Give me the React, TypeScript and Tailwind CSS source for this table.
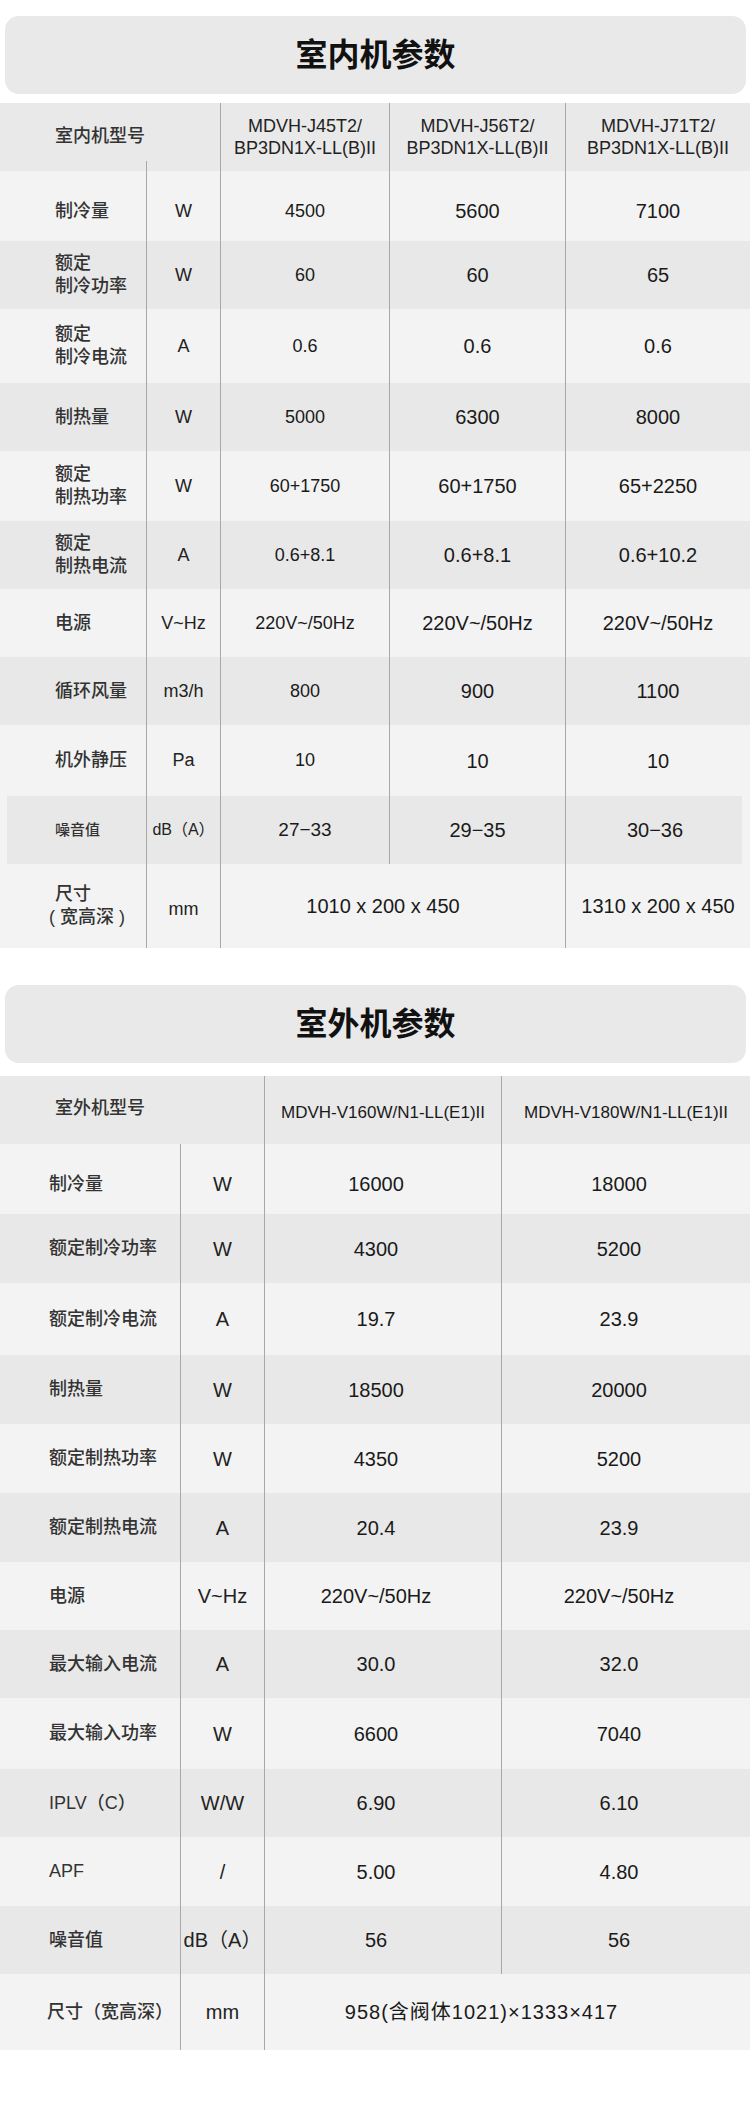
import React from 'react';

type Row = {
  label: string[];
  unit: string;
  values: string[];
  h: string;
  pad?: string;
};

const line = 'border-l border-[#a8a8a8]';

const indoorModels = [
  ['MDVH-J45T2/', 'BP3DN1X-LL(B)II'],
  ['MDVH-J56T2/', 'BP3DN1X-LL(B)II'],
  ['MDVH-J71T2/', 'BP3DN1X-LL(B)II'],
];
const indoorWidths = ['w-[169px]', 'w-[176px]', 'w-[185px]'];
const indoorValueSize = ['text-[18px]', 'text-[20px]', 'text-[20px]'];

// first row's content sits a bit lower than centre in the reference
const indoorRows: Row[] = [
  { label: ['制冷量'], unit: 'W', values: ['4500', '5600', '7100'], h: 'h-[70px]', pad: 'pt-[10px]' },
  { label: ['额定', '制冷功率'], unit: 'W', values: ['60', '60', '65'], h: 'h-[68px]' },
  { label: ['额定', '制冷电流'], unit: 'A', values: ['0.6', '0.6', '0.6'], h: 'h-[74px]' },
  { label: ['制热量'], unit: 'W', values: ['5000', '6300', '8000'], h: 'h-[68px]' },
  { label: ['额定', '制热功率'], unit: 'W', values: ['60+1750', '60+1750', '65+2250'], h: 'h-[70px]' },
  { label: ['额定', '制热电流'], unit: 'A', values: ['0.6+8.1', '0.6+8.1', '0.6+10.2'], h: 'h-[68px]' },
  { label: ['电源'], unit: 'V~Hz', values: ['220V~/50Hz', '220V~/50Hz', '220V~/50Hz'], h: 'h-[68px]' },
  { label: ['循环风量'], unit: 'm3/h', values: ['800', '900', '1100'], h: 'h-[68px]' },
  { label: ['机外静压'], unit: 'Pa', values: ['10', '10', '10'], h: 'h-[71px]' },
];

const outdoorRows: Row[] = [
  { label: ['制冷量'], unit: 'W', values: ['16000', '18000'], h: 'h-[70px]', pad: 'pt-[10px]' },
  { label: ['额定制冷功率'], unit: 'W', values: ['4300', '5200'], h: 'h-[69px]' },
  { label: ['额定制冷电流'], unit: 'A', values: ['19.7', '23.9'], h: 'h-[72px]' },
  { label: ['制热量'], unit: 'W', values: ['18500', '20000'], h: 'h-[69px]' },
  { label: ['额定制热功率'], unit: 'W', values: ['4350', '5200'], h: 'h-[69px]' },
  { label: ['额定制热电流'], unit: 'A', values: ['20.4', '23.9'], h: 'h-[69px]' },
  { label: ['电源'], unit: 'V~Hz', values: ['220V~/50Hz', '220V~/50Hz'], h: 'h-[68px]' },
  { label: ['最大输入电流'], unit: 'A', values: ['30.0', '32.0'], h: 'h-[68px]' },
  { label: ['最大输入功率'], unit: 'W', values: ['6600', '7040'], h: 'h-[71px]' },
  { label: ['IPLV（C）'], unit: 'W/W', values: ['6.90', '6.10'], h: 'h-[68px]' },
  { label: ['APF'], unit: '/', values: ['5.00', '4.80'], h: 'h-[69px]' },
  { label: ['噪音值'], unit: 'dB（A）', values: ['56', '56'], h: 'h-[68px]' },
];
const outdoorWidths = ['w-[237px]', 'w-[249px]'];

function SectionTitle({ text }: { text: string }) {
  return (
    <div className="ml-[5px] mr-[4px] flex h-[78px] items-center justify-center rounded-[14px] bg-[#e9e9e9]">
      <span className="text-[32px] font-bold text-[#111]">{text}</span>
    </div>
  );
}

function IndoorTable() {
  return (
    <div>
      {/* header */}
      <div className="flex h-[68px] bg-[#e9e9e9]">
        <div className="flex w-[220px] flex-col">
          <div className="flex flex-1 items-center pl-[55px] pt-[8px] text-[18px] font-medium text-[#333]">
            室内机型号
          </div>
          <div className={`ml-[146px] h-[10px] ${line}`} />
        </div>
        {indoorModels.map((m, i) => (
          <div
            key={i}
            className={`flex ${indoorWidths[i]} flex-col items-center justify-center ${line} text-[18px] leading-[22px] text-[#222]`}
          >
            <span>{m[0]}</span>
            <span>{m[1]}</span>
          </div>
        ))}
      </div>

      {indoorRows.map((r, i) => (
        <div key={i} className={`flex ${r.h} ${i % 2 === 0 ? 'bg-[#f3f3f3]' : 'bg-[#e8e8e8]'}`}>
          <div
            className={`flex w-[146px] flex-col justify-center pl-[55px] ${r.pad ?? ''} text-[18px] font-medium leading-[23px] text-[#333]`}
          >
            {r.label.map((l) => (
              <span key={l}>{l}</span>
            ))}
          </div>
          <div className={`flex w-[74px] items-center justify-center ${r.pad ?? ''} ${line} text-[18px] text-[#222]`}>
            {r.unit}
          </div>
          {r.values.map((v, j) => (
            <div
              key={j}
              className={`flex ${indoorWidths[j]} items-center justify-center ${r.pad ?? ''} ${line} ${indoorValueSize[j]} text-[#1a1a1a]`}
            >
              {v}
            </div>
          ))}
        </div>
      ))}

      {/* noise row, inset background */}
      <div className="h-[68px] bg-[#f3f3f3]">
        <div className="ml-[7px] mr-[8px] flex h-full bg-[#e8e8e8]">
          <div className="flex w-[139px] items-center pl-[48px] text-[15px] font-medium text-[#333]">噪音值</div>
          <div className={`flex w-[74px] items-center justify-center ${line} text-[16px] text-[#222]`}>dB（A）</div>
          <div className={`flex w-[169px] items-center justify-center ${line} text-[19px] text-[#1a1a1a]`}>27−33</div>
          <div className={`flex w-[176px] items-center justify-center ${line} text-[20px] text-[#1a1a1a]`}>29−35</div>
          <div className={`flex w-[177px] items-center justify-center pl-[2px] ${line} text-[20px] text-[#1a1a1a]`}>30−36</div>
        </div>
      </div>

      {/* size row */}
      <div className="flex h-[84px] bg-[#f3f3f3]">
        <div className="flex w-[146px] flex-col justify-center pl-[55px] text-[18px] font-medium leading-[23px] text-[#333]">
          <span>尺寸</span>
          <span className="-ml-[6px]">( 宽高深 )</span>
        </div>
        <div className={`flex w-[74px] items-center justify-center pt-[6px] ${line} text-[18px] text-[#222]`}>mm</div>
        <div className={`flex w-[345px] items-center justify-center pr-[20px] ${line} text-[20px] text-[#1a1a1a]`}>
          1010 x 200 x 450
        </div>
        <div className={`flex w-[185px] items-center justify-center ${line} text-[20px] text-[#1a1a1a]`}>
          1310 x 200 x 450
        </div>
      </div>
    </div>
  );
}

function OutdoorTable() {
  return (
    <div>
      <div className="flex h-[68px] bg-[#e9e9e9]">
        <div className="flex w-[264px] items-center pb-[4px] pl-[55px] text-[18px] font-medium text-[#333]">
          室外机型号
        </div>
        <div className={`flex w-[237px] items-center justify-center pt-[6px] ${line} text-[17px] text-[#1a1a1a]`}>
          MDVH-V160W/N1-LL(E1)II
        </div>
        <div className={`flex w-[249px] items-center justify-center pt-[6px] ${line} text-[17px] text-[#1a1a1a]`}>
          MDVH-V180W/N1-LL(E1)II
        </div>
      </div>

      {outdoorRows.map((r, i) => (
        <div key={i} className={`flex ${r.h} ${i % 2 === 0 ? 'bg-[#f3f3f3]' : 'bg-[#e8e8e8]'}`}>
          <div className={`flex w-[180px] items-center pl-[49px] ${r.pad ?? ''} text-[18px] font-medium text-[#333]`}>
            {r.label[0]}
          </div>
          <div className={`flex w-[84px] items-center justify-center ${r.pad ?? ''} ${line} text-[20px] text-[#222]`}>
            {r.unit}
          </div>
          {r.values.map((v, j) => (
            <div
              key={j}
              className={`flex ${outdoorWidths[j]} items-center justify-center pr-[14px] ${r.pad ?? ''} ${line} text-[20px] text-[#1a1a1a]`}
            >
              {v}
            </div>
          ))}
        </div>
      ))}

      <div className="flex h-[76px] bg-[#f3f3f3]">
        <div className="flex w-[180px] items-center pl-[47px] text-[18px] font-medium text-[#333]">尺寸（宽高深）</div>
        <div className={`flex w-[84px] items-center justify-center ${line} text-[20px] text-[#222]`}>mm</div>
        <div
          className={`flex w-[486px] items-center justify-center pr-[52px] ${line} text-[20px] tracking-[1px] text-[#1a1a1a]`}
        >
          958(含阀体1021)×1333×417
        </div>
      </div>
    </div>
  );
}

export default function App() {
  return (
    <div className="w-[750px] bg-white pb-[52px] pt-[16px] font-['Liberation_Sans','Noto_Sans_CJK_SC',sans-serif]">
      <SectionTitle text="室内机参数" />
      <div className="mt-[9px]">
        <IndoorTable />
      </div>
      <div className="mt-[37px]">
        <SectionTitle text="室外机参数" />
      </div>
      <div className="mt-[13px]">
        <OutdoorTable />
      </div>
    </div>
  );
}
